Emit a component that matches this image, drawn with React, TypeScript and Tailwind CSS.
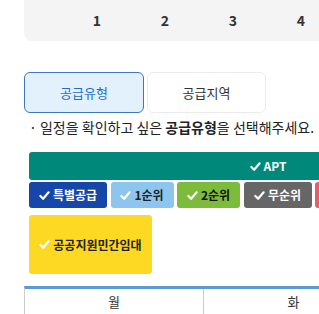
const Check = ({ className = "" }: { className?: string }) => (
  <svg viewBox="0 0 12 12" className={`w-[11px] h-[11px] ${className}`} fill="none">
    <polyline points="1.5,6.5 4.5,9.5 10.5,2.5" stroke="currentColor" strokeWidth="2.4" strokeLinecap="round" strokeLinejoin="round" />
  </svg>
);

const chips = [
  { label: "특별공급", w: "w-[78px]", cls: "bg-[#1546a8] text-white", icon: "text-white" },
  { label: "1순위", w: "w-[63px]", cls: "bg-[#8ec5ef] text-[#222]", icon: "text-white" },
  { label: "2순위", w: "w-[63px]", cls: "bg-[#7dbb3c] text-[#111]", icon: "text-white" },
  { label: "무순위", w: "w-[68px]", cls: "bg-[#666666] text-white", icon: "text-white" },
  { label: "", w: "w-[60px]", cls: "bg-[#e4606a] text-white", icon: "text-white" },
];

export default function App() {
  return (
    <div className="w-[319px] h-[314px] overflow-hidden bg-white font-['Noto_Sans_CJK_KR','Noto_Sans',sans-serif] text-[#333]">
      <div className="pl-6">
        <div className="w-[400px] h-[41px] bg-[#f4f4f4] rounded-bl-lg flex items-center pl-[39px]">
          {["1", "2", "3", "4"].map((n) => (
            <span key={n} className="w-[68px] flex-none text-center text-[14px] font-bold text-[#333]">{n}</span>
          ))}
        </div>

        <div className="flex gap-[3px] mt-[31px]">
          <button className="w-[120px] h-[41px] rounded-md border border-[#3b78c4] bg-[#e3f1fd] text-[13px] text-[#1f6fbf]">공급유형</button>
          <button className="w-[119px] h-[41px] rounded-md border border-[#ececec] bg-white text-[13px] text-[#333]">공급지역</button>
        </div>

        <p className="mt-[5px] pl-[5px] text-[14px] leading-[19px] whitespace-nowrap text-[#222]">
          · 일정을 확인하고 싶은 <b className="font-bold">공급유형</b>을 선택해주세요.
        </p>

        <div className="pl-[5px] mt-[15px]">
          <div className="w-[478px] h-[28px] rounded-[3px] bg-[#00897b] flex items-center justify-center gap-[3px] text-white text-[12px] font-bold">
            <Check />
            <span>APT</span>
          </div>

          <div className="flex gap-[3.5px] mt-[2px] w-[400px]">
            {chips.map((c, i) => (
              <div key={i} className={`${c.w} flex-none h-[26px] rounded-[3px] flex items-center justify-center gap-[3px] text-[12px] font-bold ${c.cls}`}>
                <Check className={c.icon} />
                <span>{c.label}</span>
              </div>
            ))}
          </div>

          <div className="mt-[7px] w-[123px] h-[59px] rounded-[3px] bg-[#fdd923] flex items-center justify-center gap-[3px] text-[12px] font-bold text-[#222]">
            <Check className="text-white" />
            <span>공공지원민간임대</span>
          </div>
        </div>

        <div className="mt-[12px] w-[400px] border-t-[3px] border-[#5b9bd5] border-l border-l-[#cccccc]">
          <div className="flex h-[26px] border-b border-[#cccccc] text-[13px] text-[#333]">
            <div className="w-[179px] flex-none flex items-center justify-center border-r border-[#cccccc]">월</div>
            <div className="w-[179px] flex-none flex items-center justify-center">화</div>
          </div>
        </div>
      </div>
    </div>
  );
}
